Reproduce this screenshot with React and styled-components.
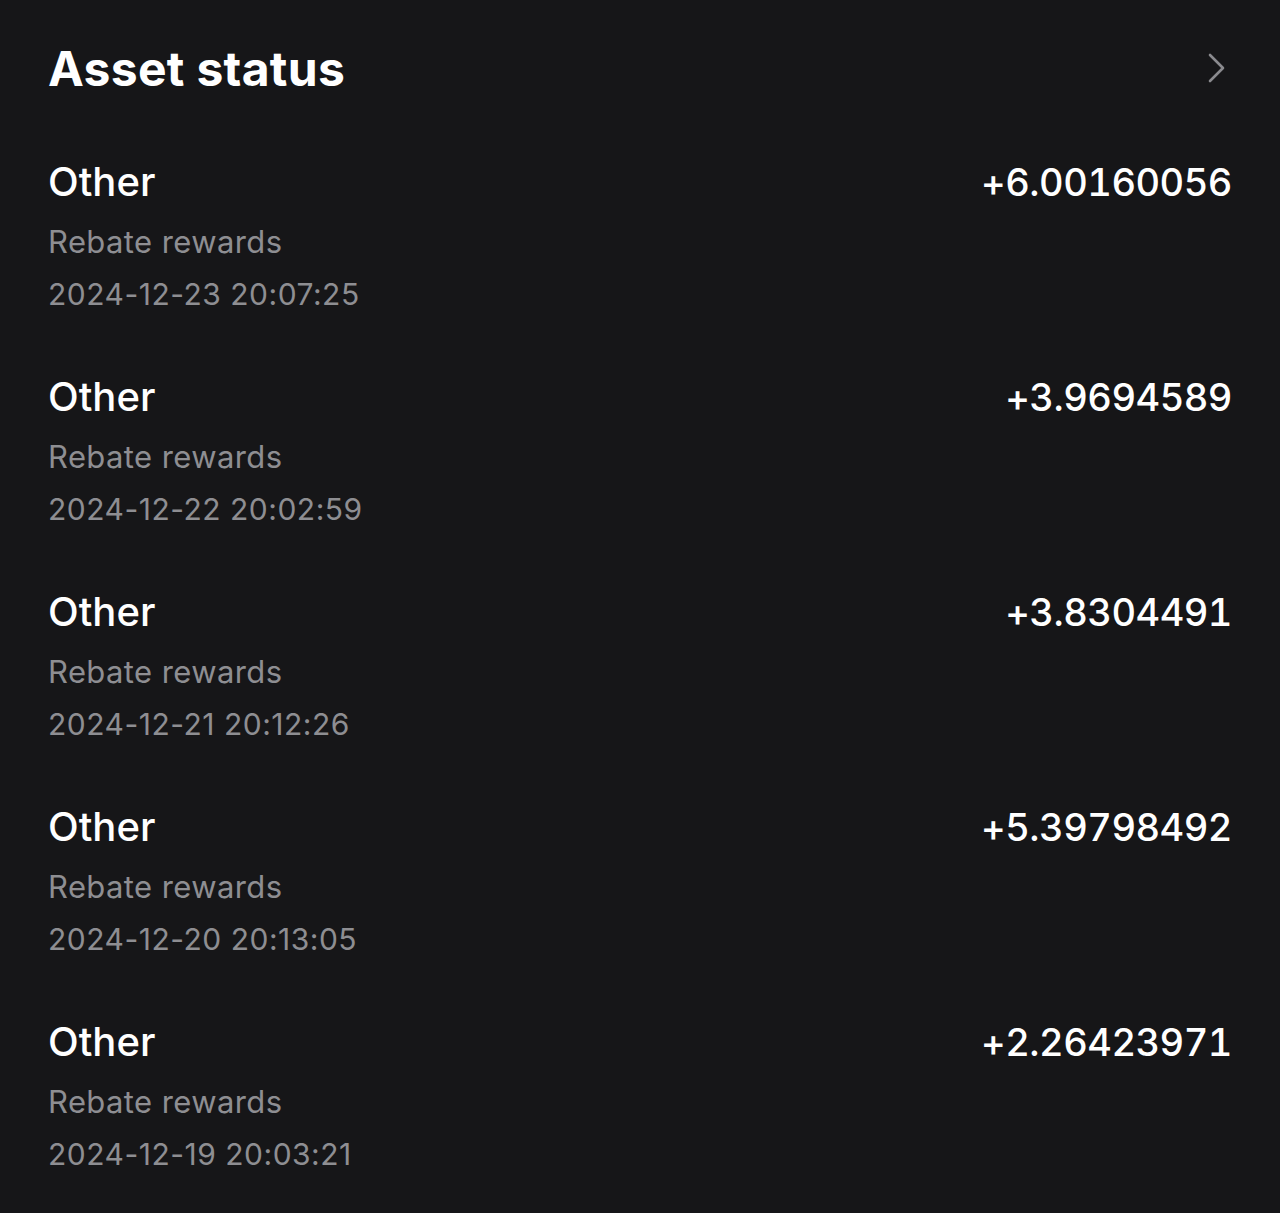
import React from 'react'
import styled, { createGlobalStyle } from 'styled-components'

const GlobalStyle = createGlobalStyle`
  html, body {
    margin: 0;
    padding: 0;
    background: #161618;
  }
  body {
    font-family: Inter, "Noto Sans", "Liberation Sans", sans-serif;
    -webkit-font-smoothing: antialiased;
  }
`

const Page = styled.div`
  min-height: 1213px;
  box-sizing: border-box;
  padding: 39px 48px 0 48px;
  background: #161618;
  color: #ffffff;
`

/* Header */

const Header = styled.div`
  display: flex;
  align-items: center;
  justify-content: space-between;
  height: 60px;
`

const Title = styled.h1`
  margin: 0;
  font-size: 48px;
  line-height: 60px;
  font-weight: 700;
  letter-spacing: 0.3px;
  color: #ffffff;
`

const Chevron = styled.svg`
  width: 22px;
  height: 32px;
  margin-right: 4px;
  margin-top: -2px;
`

/* Records */

const List = styled.div`
  display: flex;
  flex-direction: column;
  gap: 58px;
  margin-top: 58px;
`

const Row = styled.div`
  display: flex;
  justify-content: space-between;
  align-items: flex-start;
`

const Info = styled.div`
  display: flex;
  flex-direction: column;
`

const Kind = styled.div`
  font-size: 40px;
  line-height: 50px;
  font-weight: 500;
  color: #ffffff;
`

const Sub = styled.div`
  font-size: ${p => p.$size}px;
  line-height: 40px;
  color: #8e8e92;
  letter-spacing: ${p => p.$spacing}px;
  margin-top: ${p => p.$gap}px;
`

const Amount = styled.div`
  font-size: 38px;
  line-height: 50px;
  font-weight: 500;
  color: #ffffff;
  letter-spacing: -0.5px;
  font-variant-numeric: tabular-nums;
`

const records = [
  { amount: '+6.00160056', time: '2024-12-23 20:07:25' },
  { amount: '+3.9694589', time: '2024-12-22 20:02:59' },
  { amount: '+3.8304491', time: '2024-12-21 20:12:26' },
  { amount: '+5.39798492', time: '2024-12-20 20:13:05' },
  { amount: '+2.26423971', time: '2024-12-19 20:03:21' },
]

export default function App() {
  return (
    <Page>
      <GlobalStyle />
      <Header>
        <Title>Asset status</Title>
        <Chevron viewBox="0 0 22 32" fill="none">
          <path
            d="M4 3 L17 16 L4 29"
            stroke="#8a8a8e"
            strokeWidth="2.6"
            strokeLinecap="round"
            strokeLinejoin="round"
          />
        </Chevron>
      </Header>
      <List>
        {records.map(r => (
          <Row key={r.time}>
            <Info>
              <Kind>Other</Kind>
              <Sub $gap={15} $size={31} $spacing={0.4}>
                Rebate rewards
              </Sub>
              <Sub $gap={12} $size={30} $spacing={0.5}>
                {r.time}
              </Sub>
            </Info>
            <Amount>{r.amount}</Amount>
          </Row>
        ))}
      </List>
    </Page>
  )
}
